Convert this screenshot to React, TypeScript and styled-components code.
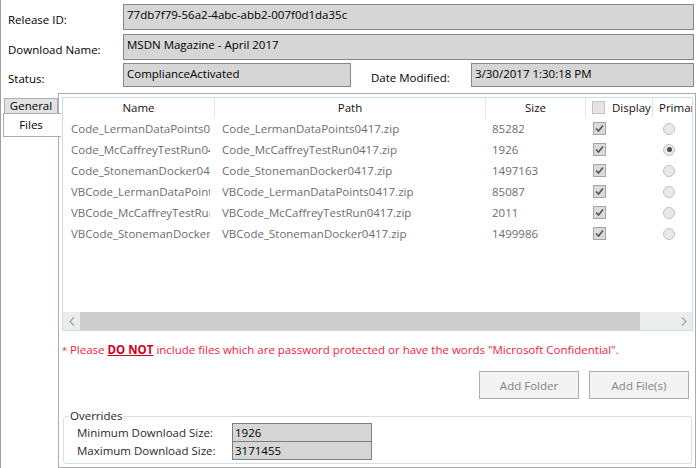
import React from 'react'
import styled, { createGlobalStyle } from 'styled-components'

interface FileRow {
  name: string
  path: string
  size: number
  primary?: boolean
}

const files: FileRow[] = [
  { name: 'Code_LermanDataPoints0417', path: 'Code_LermanDataPoints0417.zip', size: 85282 },
  { name: 'Code_McCaffreyTestRun0417', path: 'Code_McCaffreyTestRun0417.zip', size: 1926, primary: true },
  { name: 'Code_StonemanDocker0417', path: 'Code_StonemanDocker0417.zip', size: 1497163 },
  { name: 'VBCode_LermanDataPoints0417', path: 'VBCode_LermanDataPoints0417.zip', size: 85087 },
  { name: 'VBCode_McCaffreyTestRun0417', path: 'VBCode_McCaffreyTestRun0417.zip', size: 2011 },
  { name: 'VBCode_StonemanDocker0417', path: 'VBCode_StonemanDocker0417.zip', size: 1499986 },
]

const CheckMark: React.FC = () => (
  <CheckBox>
    <svg width="11" height="11" viewBox="0 0 11 11">
      <path d="M2 5.5 L4.5 8 L9 2.5" fill="none" stroke="#555" strokeWidth="1.6" />
    </svg>
  </CheckBox>
)

const Chevron: React.FC<{ dir: 'left' | 'right' }> = ({ dir }) => (
  <svg width="6" height="9" viewBox="0 0 6 9">
    <path
      d={dir === 'left' ? 'M5 0.5 L1 4.5 L5 8.5' : 'M1 0.5 L5 4.5 L1 8.5'}
      fill="none"
      stroke="#a6a6a6"
      strokeWidth="1.2"
    />
  </svg>
)

const App: React.FC = () => {
  const rowElements = files.map(file => (
    <Row key={file.path}>
      <Cell $pad={8}>
        <CellText>{file.name}</CellText>
      </Cell>
      <Cell $pad={7}>
        <CellText>{file.path}</CellText>
      </Cell>
      <Cell $pad={6}>
        <CellText>{file.size}</CellText>
      </Cell>
      <Cell $pad={7}>
        <CheckMark />
      </Cell>
      <Cell $pad={10}>
        <Radio $checked={!!file.primary} />
      </Cell>
    </Row>
  ))

  return (
    <>
      <GlobalStyle />
      <Window>
        <InfoGrid>
          <Label>Release ID:</Label>
          <Field $h={26}>77db7f79-56a2-4abc-abb2-007f0d1da35c</Field>
          <Label>Download Name:</Label>
          <Field $h={26}>MSDN Magazine - April 2017</Field>
          <Label>Status:</Label>
          <StatusRow>
            <Field $h={24} $w={228}>ComplianceActivated</Field>
            <DateLabel>Date Modified:</DateLabel>
            <Field $h={24}>3/30/2017 1:30:18 PM</Field>
          </StatusRow>
        </InfoGrid>

        <TabArea>
          <TabStrip>
            <Tab>General</Tab>
            <Tab $active>Files</Tab>
          </TabStrip>

          <Panel>
            <Grid>
              <HeaderRow>
                <HeaderCell>Name</HeaderCell>
                <HeaderCell>Path</HeaderCell>
                <HeaderCell>Size</HeaderCell>
                <HeaderCell $left>
                  <EmptyBox />
                  Display
                </HeaderCell>
                <HeaderCell $left>Primary</HeaderCell>
              </HeaderRow>
              <GridBody>{rowElements}</GridBody>
              <HScroll>
                <ScrollArrow>
                  <Chevron dir="left" />
                </ScrollArrow>
                <ScrollThumb />
                <ScrollTrack />
                <ScrollArrow>
                  <Chevron dir="right" />
                </ScrollArrow>
              </HScroll>
            </Grid>

            <Notice>
              <Star>*</Star> Please <Strong>DO NOT</Strong> include files which are password protected or
              have the words "Microsoft Confidential".
            </Notice>

            <ButtonRow>
              <Button disabled>Add Folder</Button>
              <Button disabled>Add File(s)</Button>
            </ButtonRow>

            <Overrides>
              <Legend>Overrides</Legend>
              <OverrideRow>
                <OverrideLabel>Minimum Download Size:</OverrideLabel>
                <SmallField>1926</SmallField>
              </OverrideRow>
              <OverrideRow>
                <OverrideLabel>Maximum Download Size:</OverrideLabel>
                <SmallField>3171455</SmallField>
              </OverrideRow>
            </Overrides>
          </Panel>
        </TabArea>
      </Window>
    </>
  )
}

const GlobalStyle = createGlobalStyle`
  html, body {
    margin: 0;
    padding: 0;
    background: #fff;
  }
  body {
    font-family: 'Open Sans', 'Noto Sans', sans-serif;
    font-size: 11.5px;
    color: #000;
  }
`

const Window = styled.div`
  width: 696px;
  height: 468px;
  box-sizing: border-box;
  border-left: 1px solid #a0a0a0;
  display: flex;
  flex-direction: column;
  overflow: hidden;
`

const InfoGrid = styled.div`
  display: grid;
  grid-template-columns: 115px 1fr;
  grid-template-rows: 26px 26px 24px;
  row-gap: 4px;
  padding: 4px 2px 0 7px;
`

const Label = styled.div`
  align-self: center;
  padding-top: 4px;
  white-space: nowrap;
`

const Field = styled.div<{ $h: number; $w?: number }>`
  height: ${({ $h }) => $h}px;
  width: ${({ $w }) => ($w ? `${$w}px` : 'auto')};
  flex: ${({ $w }) => ($w ? 'none' : '1')};
  box-sizing: border-box;
  border: 1px solid #878787;
  background: #d6d6d6;
  padding: 1px 3px;
  line-height: 18px;
  white-space: nowrap;
  overflow: hidden;
`

const StatusRow = styled.div`
  display: flex;
  align-items: flex-start;
  margin-top: -1px;
`

const DateLabel = styled.div`
  width: 100px;
  margin-left: 20px;
  padding-top: 7px;
  white-space: nowrap;
`

const TabArea = styled.div`
  flex: 1;
  display: flex;
  margin-top: 5px;
  min-height: 0;
`

const TabStrip = styled.div`
  width: 57px;
  flex: none;
  display: flex;
  flex-direction: column;
  padding-top: 5px;
`

const Tab = styled.div<{ $active?: boolean }>`
  position: relative;
  z-index: ${({ $active }) => ($active ? 1 : 0)};
  box-sizing: border-box;
  height: ${({ $active }) => ($active ? 24 : 16)}px;
  width: ${({ $active }) => ($active ? 58 : 54)}px;
  margin-left: ${({ $active }) => ($active ? 2 : 3)}px;
  margin-top: ${({ $active }) => ($active ? -1 : 0)}px;
  border: 1px solid #acacac;
  border-right: ${({ $active }) => ($active ? 'none' : '1px solid #acacac')};
  background: ${({ $active }) => ($active ? '#fff' : '#e2e2e2')};
  text-align: center;
  line-height: ${({ $active }) => ($active ? 21 : 14)}px;
  padding-right: ${({ $active }) => ($active ? 3 : 0)}px;
`

const Panel = styled.div`
  flex: 1;
  min-width: 0;
  box-sizing: border-box;
  border: 1px solid #acacac;
  display: flex;
  flex-direction: column;
  padding: 3px 2px 3px 3px;
`

const Grid = styled.div`
  height: 234px;
  flex: none;
  box-sizing: border-box;
  border: 1px solid #c9dfe8;
  display: flex;
  flex-direction: column;
  overflow: hidden;
`

const columns = '152px 271px 100px 67px 80px'

const HeaderRow = styled.div`
  display: grid;
  grid-template-columns: ${columns};
  height: 20px;
  flex: none;
`

const HeaderCell = styled.div<{ $left?: boolean }>`
  display: flex;
  align-items: center;
  justify-content: ${({ $left }) => ($left ? 'flex-start' : 'center')};
  padding-left: ${({ $left }) => ($left ? 6 : 0)}px;
  padding-bottom: 2px;
  border-right: 1px solid #e4e4e4;
  white-space: nowrap;
  overflow: hidden;
  color: #111;
`

const EmptyBox = styled.span`
  width: 13px;
  height: 13px;
  box-sizing: border-box;
  border: 1px solid #c4c4c4;
  background: #e4e4e4;
  margin-right: 7px;
  flex: none;
`

const GridBody = styled.div`
  flex: 1;
  overflow: hidden;
`

const Row = styled.div`
  display: grid;
  grid-template-columns: ${columns};
  height: 21px;
`

const Cell = styled.div<{ $pad: number }>`
  display: flex;
  align-items: center;
  min-width: 0;
  padding: 0 5px 0 ${({ $pad }) => $pad}px;
  color: #6d6d6d;
`

const CellText = styled.span`
  flex: 1;
  min-width: 0;
  overflow: hidden;
  white-space: nowrap;
`

const CheckBox = styled.span`
  width: 13px;
  height: 13px;
  box-sizing: border-box;
  border: 1px solid #a5a5a5;
  background: #dadada;
  display: flex;
  align-items: center;
  justify-content: center;
`

const Radio = styled.span<{ $checked: boolean }>`
  width: 12px;
  height: 12px;
  box-sizing: border-box;
  border-radius: 50%;
  border: 1px solid #c2c2c2;
  background: #e9e9e9;
  display: flex;
  align-items: center;
  justify-content: center;

  &::after {
    content: '';
    display: ${({ $checked }) => ($checked ? 'block' : 'none')};
    width: 5px;
    height: 5px;
    border-radius: 50%;
    background: #4d4d4d;
  }
`

const HScroll = styled.div`
  height: 18px;
  flex: none;
  display: flex;
  background: #ececec;
`

const ScrollArrow = styled.div`
  width: 17px;
  display: flex;
  align-items: center;
  justify-content: center;
`

const ScrollThumb = styled.div`
  width: 560px;
  background: #cdcdcd;
`

const ScrollTrack = styled.div`
  flex: 1;
`

const Notice = styled.div`
  margin-top: 11px;
  line-height: 16px;
  color: #f01c3c;
  white-space: nowrap;
`

const Star = styled.span`
  font-size: 9px;
`

const Strong = styled.span`
  font-weight: bold;
  text-decoration: underline;
  color: #d0001c;
`

const ButtonRow = styled.div`
  display: flex;
  justify-content: flex-end;
  gap: 10px;
  margin-top: 12px;
  margin-right: 4px;
`

const Button = styled.button`
  width: 100px;
  height: 28px;
  box-sizing: border-box;
  border: 1px solid #adadad;
  background: #f3f3f3;
  color: #838383;
  font-family: inherit;
  font-size: 11.5px;
  padding: 0;
`

const Overrides = styled.fieldset`
  margin: auto 1px 0 1px;
  padding: 0 0 3px 13px;
  border: 1px solid #d5dfe5;
  border-radius: 3px;
  min-width: 0;
`

const Legend = styled.legend`
  margin-left: -8px;
  padding: 0 1px;
  line-height: 14px;
  color: #1e1e1e;
`

const OverrideRow = styled.div`
  display: flex;
  align-items: center;
  & + & {
    margin-top: -1px;
  }
`

const OverrideLabel = styled.div`
  width: 155px;
  color: #2a2a2a;
  white-space: nowrap;
`

const SmallField = styled.div`
  width: 140px;
  height: 19px;
  box-sizing: border-box;
  border: 1px solid #7d7d7d;
  background: #d6d6d6;
  padding: 0 2px;
  line-height: 17px;
`

export default App
